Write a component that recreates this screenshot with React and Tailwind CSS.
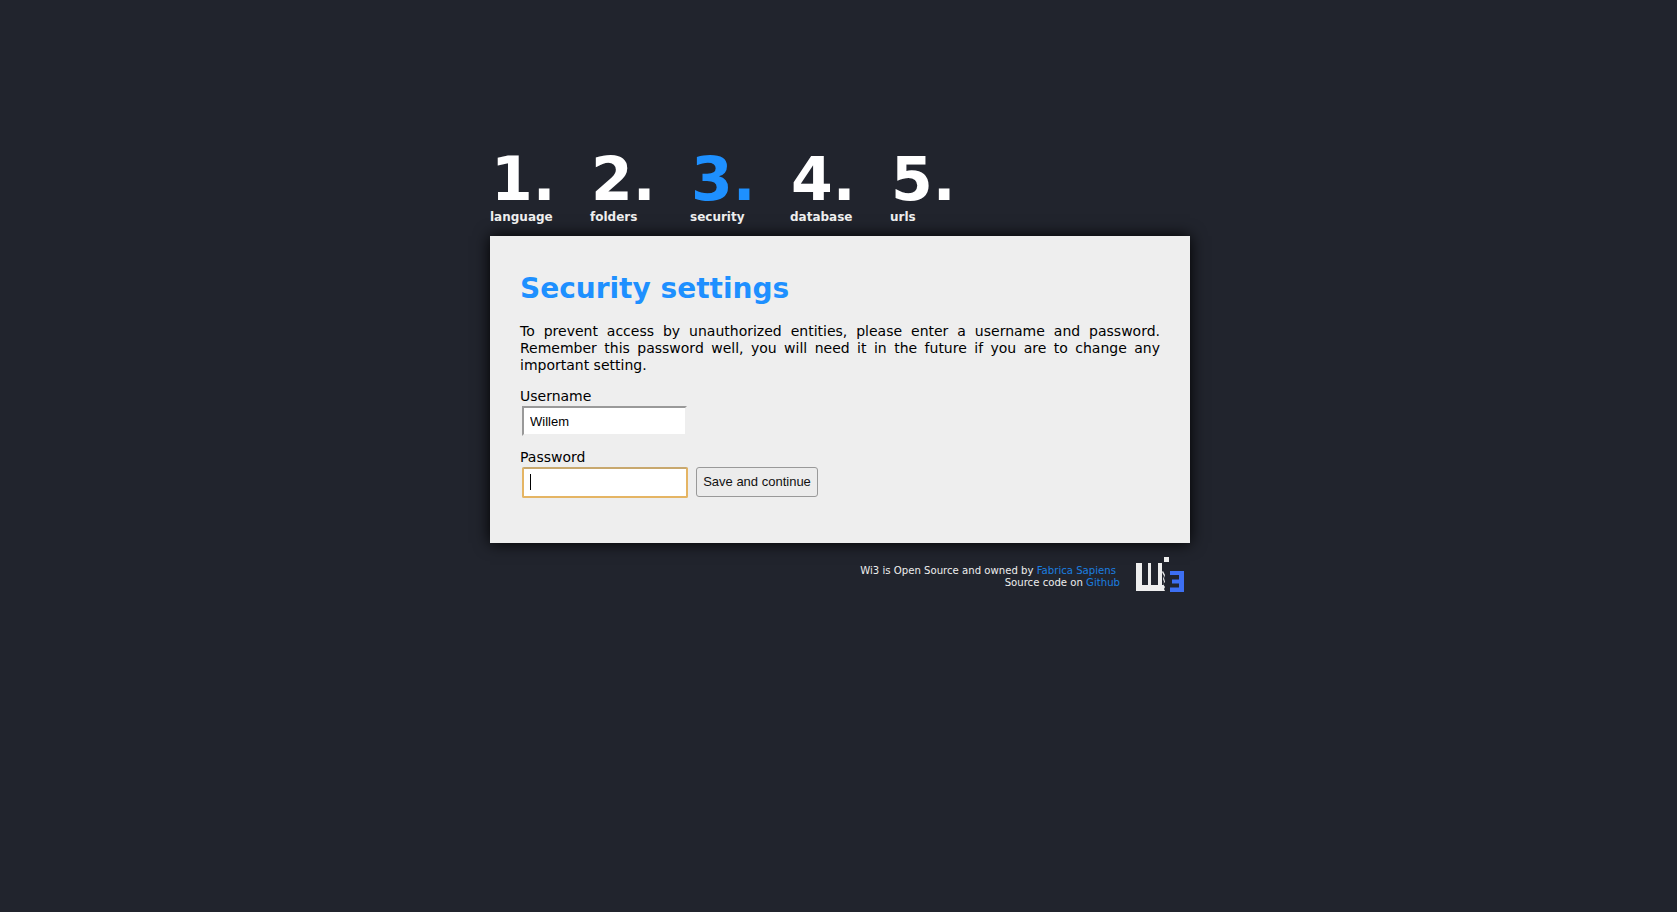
import { useEffect, useRef } from "react";

const steps = [
  { n: "1.", label: "language" },
  { n: "2.", label: "folders" },
  { n: "3.", label: "security", active: true },
  { n: "4.", label: "database" },
  { n: "5.", label: "urls" },
];

function Logo() {
  return (
    <svg viewBox="0 0 48 35" className="w-[48px] h-[35px] shrink-0">
      <path
        fill="#eeeeee"
        d="M0 6h6v22h6V6h3v22h7V6h4v22h1l1-3-1-3 1-3-2-4 1-1 2 4-1 3 1 4-2 2 2 3-1 2 1 2H0z"
      />
      <rect x="28" y="0" width="5" height="5" fill="#eeeeee" />
      <path fill="#3d6ff2" d="M34 14h14v21H34v-4.500h9V26.500h-7v-4h7V18h-9z" />
    </svg>
  );
}

export default function App() {
  const pw = useRef(null);
  useEffect(() => {
    pw.current?.focus();
  }, []);

  return (
    <div className="min-h-screen bg-[#21242d] font-['DejaVu_Sans',sans-serif]">
      <div className="w-[700px] ml-[490px] pt-[148px]">
        <div className="flex h-[88px]">
          {steps.map((s) => (
            <div key={s.n} className={`w-[100px] ${s.active ? "text-[#1e90ff]" : "text-white"}`}>
              <div className="text-[60px] leading-[62px] font-bold pl-px">{s.n}</div>
              <div className="text-[12px] leading-[15px] font-bold text-[#eeeeee]">{s.label}</div>
            </div>
          ))}
        </div>

        <div className="bg-[#eeeeee] h-[307px] px-[30px] pt-[35px] shadow-[0_0_15px_#000] text-black">
          <h1 className="text-[28px] leading-[35px] font-bold text-[#1e90ff]">Security settings</h1>
          <p className="text-[14px] leading-[17px] mt-[17px] text-justify">
            To prevent access by unauthorized entities, please enter a username and password. Remember this password
            well, you will need it in the future if you are to change any important setting.
          </p>
          <label className="block text-[14px] leading-[17px] mt-[14px] mb-px">Username</label>
          <input
            defaultValue="Willem"
            className="block ml-[2px] w-[165px] h-[30px] bg-white border-2 border-t-[#999999] border-l-[#999999] border-r-[#eeeeee] border-b-[#eeeeee] pl-[6px] text-[13px] font-['Liberation_Sans',sans-serif] outline-none"
          />
          <label className="block text-[14px] leading-[17px] mt-[13px] mb-px">Password</label>
          <div className="flex items-start gap-[8px]">
            <div className="relative ml-[2px]">
              <input
                ref={pw}
                type="password"
                className="block w-[166px] h-[31px] bg-white border-2 border-[#e5b564] border-t-[#c8a86e] rounded-[2px] pl-[6px] text-[13px] outline-none caret-transparent"
              />
              {/* the caret never shows up in a headless shot, so draw it */}
              <span className="absolute left-[8px] top-[7px] w-px h-[16px] bg-black" />
            </div>
            <button className="h-[30px] w-[122px] bg-[#ececec] border border-[#999999] rounded-[3px] text-[13px] text-[#111111] font-['Liberation_Sans',sans-serif]">
              Save and continue
            </button>
          </div>
        </div>

        <div className="flex justify-end gap-[16px] mt-[14px] pr-[6px]">
          <div className="text-[10.15px] leading-[12px] text-right text-[#eeeeee] pt-[8px]">
            <div className="pr-[4px]">
              Wi3 is Open Source and owned by <a className="text-[#1b7fe0]">Fabrica Sapiens</a>
            </div>
            <div>
              Source code on <a className="text-[#1b7fe0]">Github</a>
            </div>
          </div>
          <Logo />
        </div>
      </div>
    </div>
  );
}
